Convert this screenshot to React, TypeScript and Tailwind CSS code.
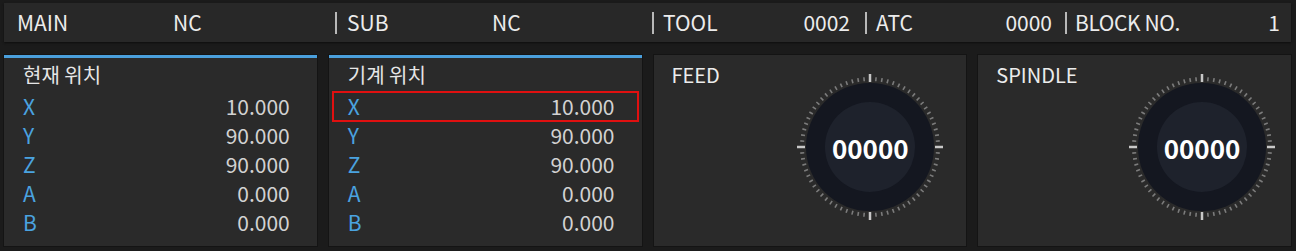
import React from "react";

const FONT = { fontFamily: '"Noto Sans CJK KR", "Noto Sans", sans-serif' };

const Sep = () => <div className="w-[2px] h-[22px] bg-[#b8b8b8] shrink-0"></div>;

const Gauge = ({ value }: { value: string }) => {
  const ticks = [];
  for (let i = 0; i < 72; i++) {
    const a = (i * 5 * Math.PI) / 180;
    const major = i % 18 === 0;
    const r1 = major ? 65 : 66;
    const r2 = major ? 73 : 70;
    ticks.push(
      <line
        key={i}
        x1={75 + r1 * Math.cos(a)}
        y1={75 + r1 * Math.sin(a)}
        x2={75 + r2 * Math.cos(a)}
        y2={75 + r2 * Math.sin(a)}
        stroke={major ? "#c8c8c8" : "#7c7c7c"}
        strokeWidth={major ? 2.5 : 1.6}
      />
    );
  }
  return (
    <div className="relative w-[150px] h-[150px]">
      <svg width="150" height="150" viewBox="0 0 150 150">
        {ticks}
        <circle cx="75" cy="75" r="64" fill="#141720" />
        <circle cx="75" cy="75" r="45" fill="#1e222c" />
      </svg>
      <div className="absolute inset-0 flex items-center justify-center text-[26px] font-bold text-white">
        {value}
      </div>
    </div>
  );
};

const PosPanel = ({ title, boxed }: { title: string; boxed?: boolean }) => {
  const rows = [
    ["X", "10.000"],
    ["Y", "90.000"],
    ["Z", "90.000"],
    ["A", "0.000"],
    ["B", "0.000"],
  ];
  return (
    <div className="bg-[#2a2a2a] border-t-[3px] border-[#4a9fdc] h-[191px] pt-[4px] shadow-[0_0_0_1px_#141414]">
      <div className="pl-[19px] text-[20px] leading-[26px] text-[#e6e6e6]">{title}</div>
      <div className="flex flex-col mt-[4px]">
        {rows.map(([k, v], i) => (
          <div
            key={k}
            className={
              "flex justify-between items-center h-[29px] mx-[4px] pl-[15px] pr-[23px] text-[21px] " +
              (boxed && i === 0 ? "outline-2 outline-[#e01010] -outline-offset-1" : "")
            }
          >
            <span className="text-[#4aa3e0]">{k}</span>
            <span className="text-[#d2d2d2]">{v}</span>
          </div>
        ))}
      </div>
    </div>
  );
};

const GaugePanel = ({ title, pr }: { title: string; pr: string }) => (
  <div className={"bg-[#2a2a2a] h-[191px] pt-[7px] pl-[18px] flex justify-between shadow-[0_0_0_1px_#141414] " + pr}>
    <div className="text-[20px] leading-[26px] text-[#ececec]">{title}</div>
    <div className="pt-[10px]">
      <Gauge value="00000" />
    </div>
  </div>
);

const App = () => {
  return (
    <div className="w-[1296px] h-[251px] bg-[#1b1b1b] pt-[3px] pl-[4px] pr-[5px]" style={FONT}>
      <div className="h-[39px] bg-[#282828] flex items-center text-[21px] text-[#ececec] shadow-[0_1px_2px_#0e0e0e]">
        <div className="flex items-center w-[331px] pl-[13px]">
          <span className="w-[156px]">MAIN</span>
          <span>NC</span>
        </div>
        <Sep />
        <div className="flex items-center w-[315px] pl-[10px]">
          <span className="w-[145px]">SUB</span>
          <span>NC</span>
        </div>
        <Sep />
        <div className="flex items-center justify-between w-[211px] pl-[9px] pr-[15px]">
          <span>TOOL</span>
          <span>0002</span>
        </div>
        <Sep />
        <div className="flex items-center justify-between w-[198px] pl-[9px] pr-[13px]">
          <span>ATC</span>
          <span>0000</span>
        </div>
        <Sep />
        <div className="flex items-center justify-between flex-1 pl-[8px] pr-[11px]">
          <span className="tracking-[-0.4px]">BLOCK NO.</span>
          <span>1</span>
        </div>
      </div>
      <div className="grid grid-cols-4 gap-[12px] mt-[13px]">
        <PosPanel title="현재 위치" />
        <PosPanel title="기계 위치" boxed />
        <GaugePanel title="FEED" pr="pr-[21px]" />
        <GaugePanel title="SPINDLE" pr="pr-[14px]" />
      </div>
    </div>
  );
};

export default App;
